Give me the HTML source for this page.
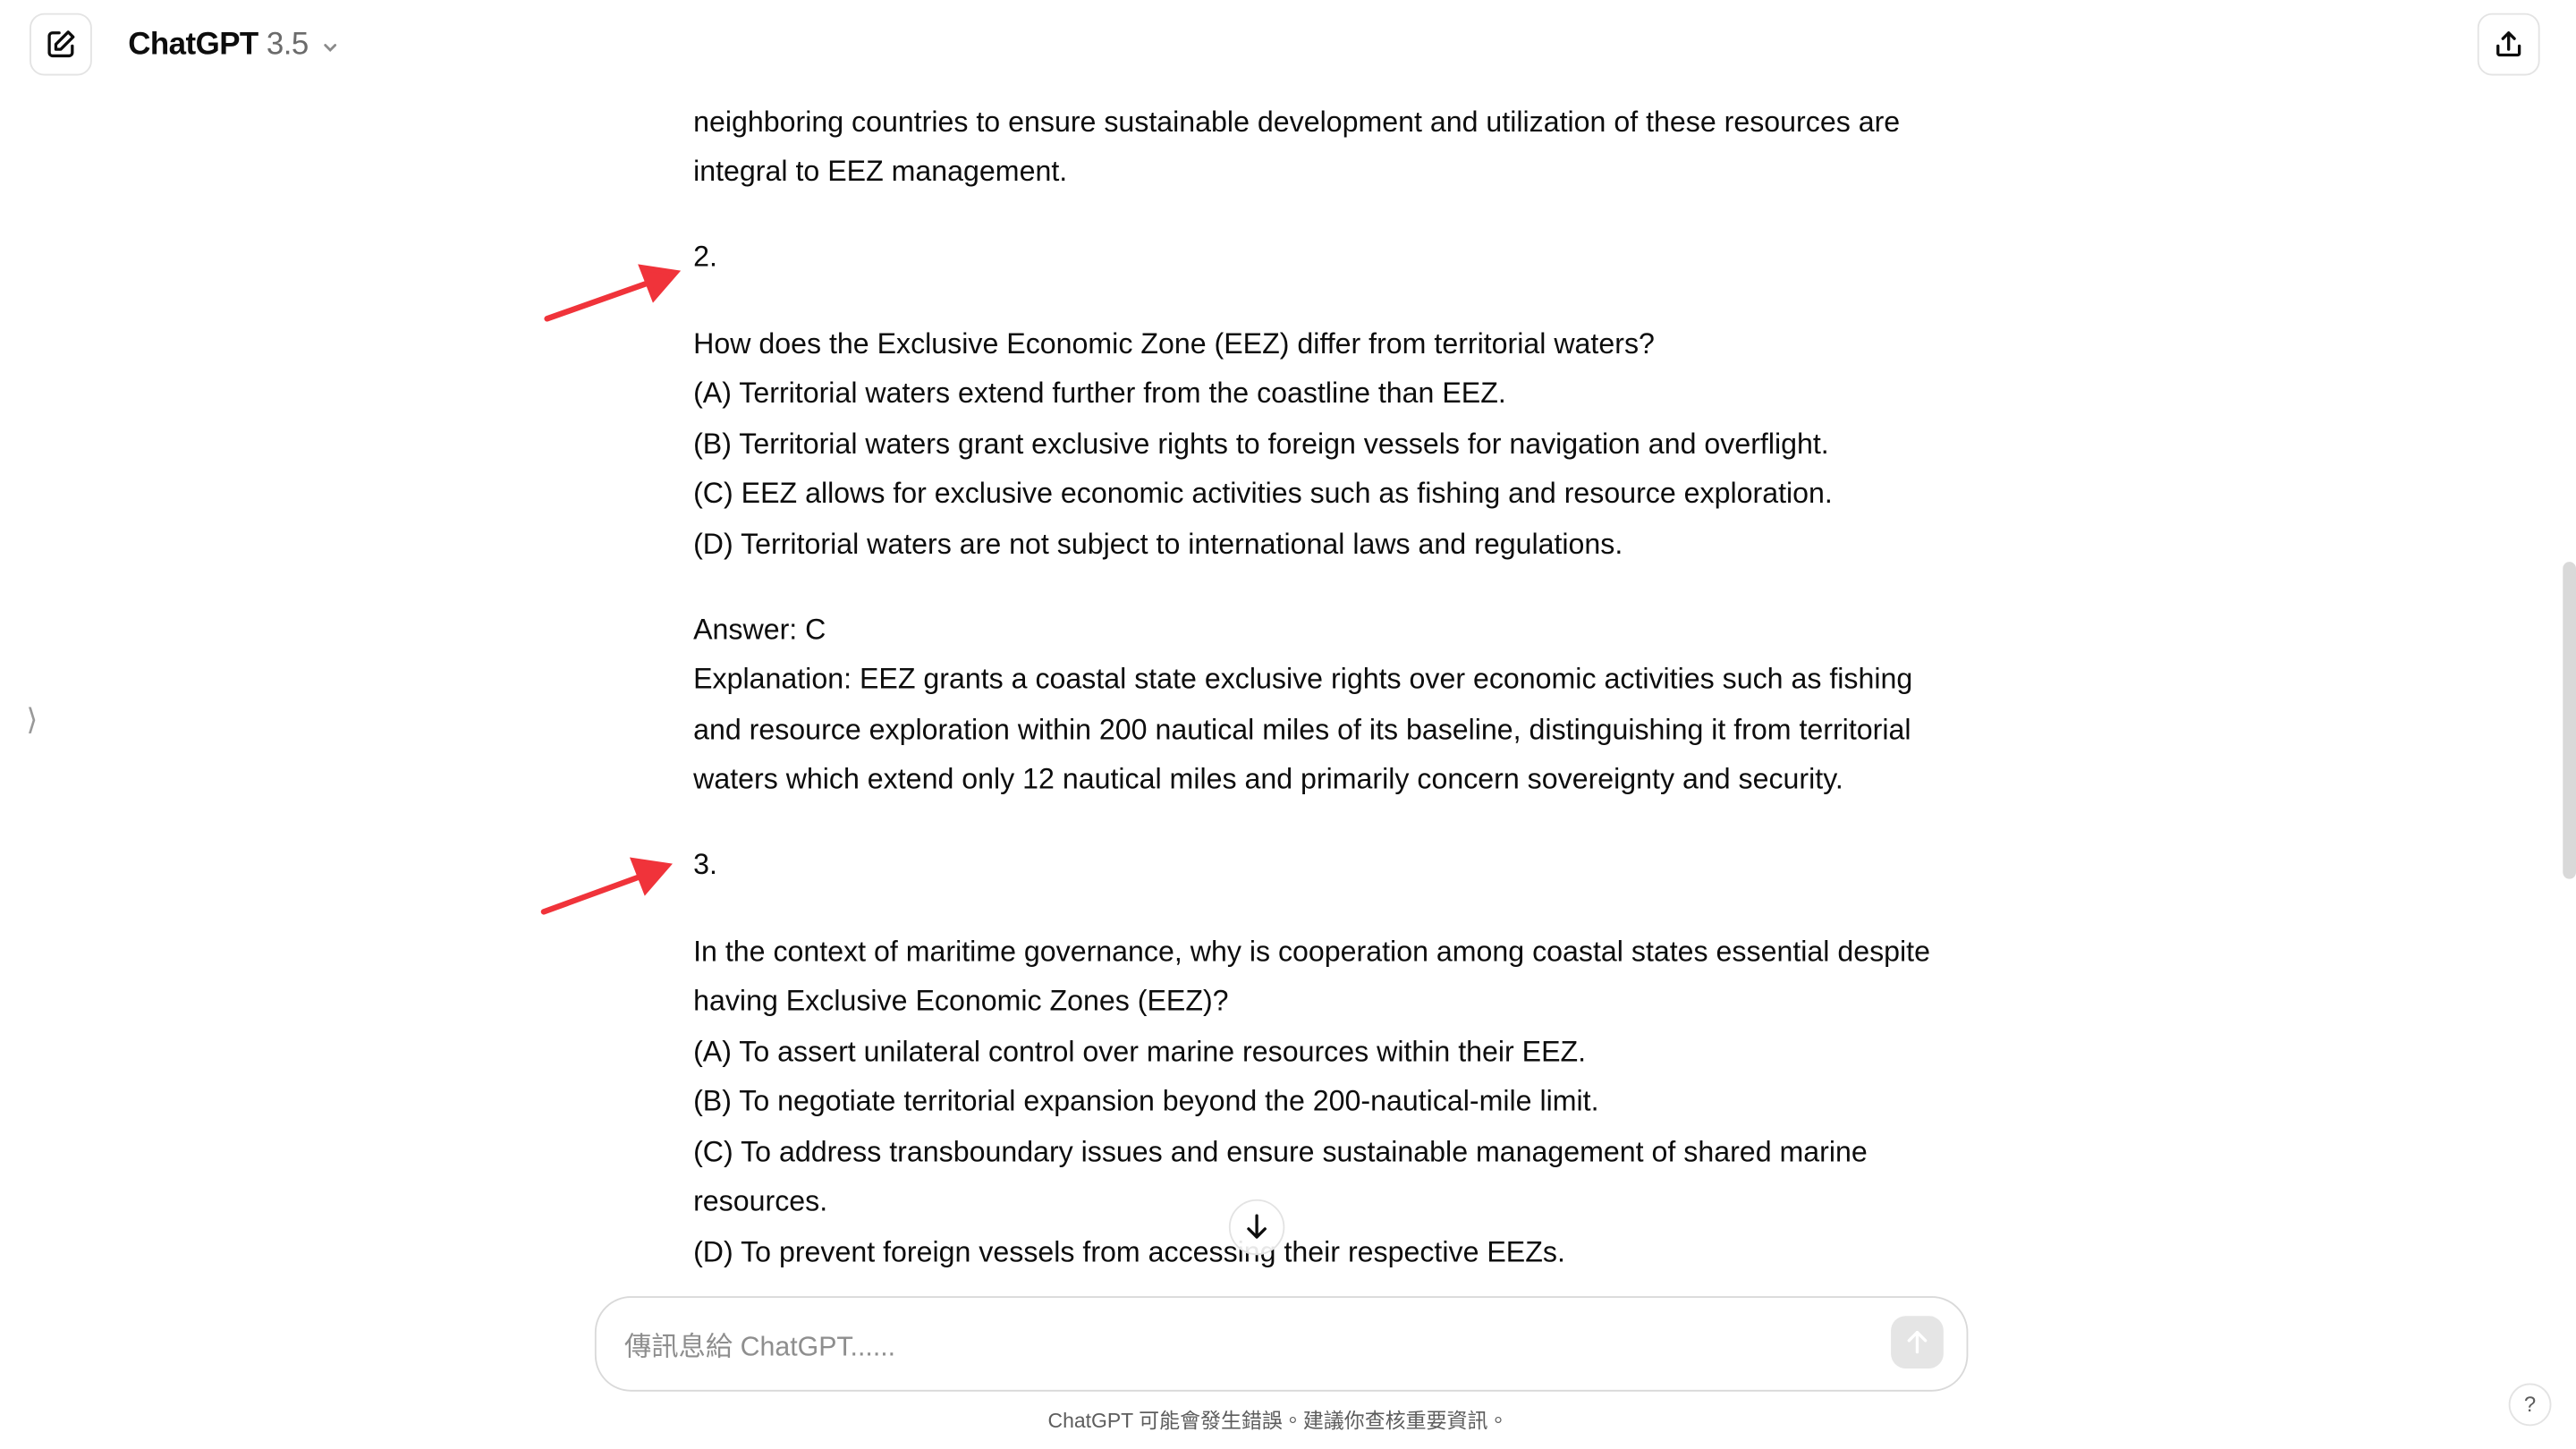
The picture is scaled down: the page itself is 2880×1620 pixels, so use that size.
<!DOCTYPE html>
<html><head><meta charset="utf-8"><style>
html,body{margin:0;padding:0;background:#fff;overflow:hidden}
body{width:2880px;height:1620px}
#w{position:absolute;left:0;top:0;width:1568px;height:882px;transform:scale(1.83673);transform-origin:0 0;font-family:"Liberation Sans","Noto Sans CJK TC",sans-serif;color:#0d0d0d}
.l{position:absolute;left:422px;font-size:17.5px;white-space:nowrap;line-height:20px}
.btn{position:absolute;border:1px solid #e3e3e3;border-radius:9px;box-sizing:border-box}
</style></head><body><div id="w">
<div class="btn" style="left:18px;top:8px;width:38px;height:38px"></div>
<svg style="position:absolute;left:27px;top:17px" width="20" height="20" viewBox="0 0 20 20" fill="none" stroke="#0d0d0d" stroke-width="1.8" stroke-linecap="round" stroke-linejoin="round"><path d="M9 3H5a2 2 0 0 0-2 2v10a2 2 0 0 0 2 2h10a2 2 0 0 0 2-2v-4"/><path d="M14.5 2.5l3 3L10 13H7v-3z"/></svg>
<div style="position:absolute;left:78px;top:17px;font-size:19px;font-weight:bold;letter-spacing:-0.3px">ChatGPT <span style="color:#6b6b6b;font-weight:normal">3.5</span></div>
<svg style="position:absolute;left:195px;top:23px" width="12" height="12" viewBox="0 0 12 12" fill="none" stroke="#8a8a8a" stroke-width="1.5" stroke-linecap="round"><path d="M3 4.5l3 3 3-3"/></svg>
<div class="btn" style="left:1508px;top:8px;width:38px;height:38px"></div>
<svg style="position:absolute;left:1517px;top:17px" width="20" height="20" viewBox="0 0 20 20" fill="none" stroke="#0d0d0d" stroke-width="1.8" stroke-linecap="round" stroke-linejoin="round"><path d="M10 13V3M6.5 6.5L10 3l3.5 3.5"/><path d="M3.5 11v4.5a1 1 0 0 0 1 1h11a1 1 0 0 0 1-1V11"/></svg>

<div class="l" style="top:64px">neighboring countries to ensure sustainable development and utilization of these resources are</div>
<div class="l" style="top:94px">integral to EEZ management.</div>
<div class="l" style="top:146px">2.</div>
<div class="l" style="top:199px">How does the Exclusive Economic Zone (EEZ) differ from territorial waters?</div>
<div class="l" style="top:229px">(A) Territorial waters extend further from the coastline than EEZ.</div>
<div class="l" style="top:260px">(B) Territorial waters grant exclusive rights to foreign vessels for navigation and overflight.</div>
<div class="l" style="top:290px">(C) EEZ allows for exclusive economic activities such as fishing and resource exploration.</div>
<div class="l" style="top:321px">(D) Territorial waters are not subject to international laws and regulations.</div>
<div class="l" style="top:373px">Answer: C</div>
<div class="l" style="top:403px">Explanation: EEZ grants a coastal state exclusive rights over economic activities such as fishing</div>
<div class="l" style="top:434px">and resource exploration within 200 nautical miles of its baseline, distinguishing it from territorial</div>
<div class="l" style="top:464px">waters which extend only 12 nautical miles and primarily concern sovereignty and security.</div>
<div class="l" style="top:516px">3.</div>
<div class="l" style="top:569px">In the context of maritime governance, why is cooperation among coastal states essential despite</div>
<div class="l" style="top:599px">having Exclusive Economic Zones (EEZ)?</div>
<div class="l" style="top:630px">(A) To assert unilateral control over marine resources within their EEZ.</div>
<div class="l" style="top:660px">(B) To negotiate territorial expansion beyond the 200-nautical-mile limit.</div>
<div class="l" style="top:691px">(C) To address transboundary issues and ensure sustainable management of shared marine</div>
<div class="l" style="top:721px">resources.</div>
<div class="l" style="top:752px">(D) To prevent foreign vessels from accessing their respective EEZs.</div>

<svg style="position:absolute;left:0;top:0" width="1568" height="882">
<g stroke="#f0333a" stroke-width="3.5" stroke-linecap="round" fill="#f0333a">
<line x1="333" y1="194" x2="398" y2="171"/><polygon points="411,166 391,163 398,181"/>
<line x1="331" y1="555" x2="394" y2="532"/><polygon points="406,527 386,524 393,542"/>
</g></svg>

<div style="position:absolute;left:16px;top:428px;font-size:18px;color:#999">⟩</div>
<div style="position:absolute;left:1560px;top:342px;width:8px;height:193px;background:#d9d9d9;border-radius:4px"></div>

<div style="position:absolute;left:748px;top:730px;width:34px;height:34px;border-radius:50%;border:1px solid #e3e3e3;background:rgba(255,255,255,0.9);box-sizing:border-box"></div>
<svg style="position:absolute;left:755px;top:737px" width="20" height="20" viewBox="0 0 20 20" fill="none" stroke="#0d0d0d" stroke-width="1.8" stroke-linecap="round" stroke-linejoin="round"><path d="M10 3v13M5 11l5 5 5-5"/></svg>

<div style="position:absolute;left:362px;top:789px;width:836px;height:58px;border:1px solid #d9d9d9;border-radius:22px;box-sizing:border-box;background:#fff"></div>
<div style="position:absolute;left:380px;top:806px;font-size:16.5px;color:#8e8e8e">傳訊息給 ChatGPT......</div>
<div style="position:absolute;left:1151px;top:801px;width:32px;height:32px;border-radius:9px;background:#e5e5e5"></div>
<svg style="position:absolute;left:1157px;top:807px" width="20" height="20" viewBox="0 0 20 20" fill="none" stroke="#fff" stroke-width="1.8" stroke-linecap="round" stroke-linejoin="round"><path d="M10 16V4M5 9l5-5 5 5"/></svg>
<div style="position:absolute;left:0;width:1556px;text-align:center;top:854px;font-size:12.5px;color:#5d5d5d">ChatGPT 可能會發生錯誤。建議你查核重要資訊。</div>
<div style="position:absolute;left:1527px;top:842px;width:26px;height:26px;border-radius:50%;border:1px solid #e3e3e3;box-sizing:border-box;text-align:center;line-height:24px;font-size:13px;color:#5d5d5d">?</div>
</div></body></html>
